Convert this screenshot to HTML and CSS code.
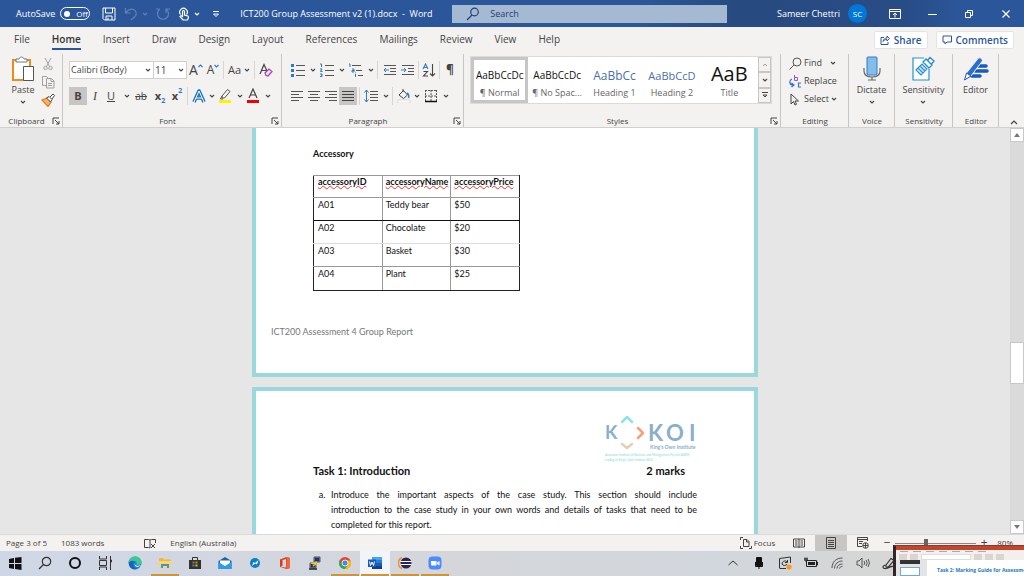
FILE: index.html
```html
<!DOCTYPE html>
<html lang="en">
<head>
<meta charset="utf-8">
<title>ICT200 Group Assessment v2 (1).docx - Word</title>
<link rel="stylesheet" href="styles.css">
</head>
<body>
<svg class="defs" aria-hidden="true">
  <symbol id="chev" viewBox="0 0 6 6"><path d="M1 2l2 2 2-2" fill="none" stroke="currentColor" stroke-width="1.1"/></symbol>
  <symbol id="launch" viewBox="0 0 8 8"><path d="M1 7V1h6M3 3l4 4M7 4v3H4" fill="none" stroke="currentColor"/></symbol>
</svg>

<header class="titlebar">
  <label class="autosave" for="autosave">AutoSave
    <span class="toggle"><input type="checkbox" id="autosave"><i class="knob"></i>Off</span>
  </label>
  <div class="quick">
    <button aria-label="Save"><svg width="14" height="14" viewBox="0 0 14 14" fill="none" stroke="currentColor"><path d="M1 1h12v12H2.500L1 11.500zM3.500 1v5h7V1M4 13V9h6v4M6 10.500V13"/></svg></button>
    <button class="dim" aria-label="Undo"><svg width="14" height="14" viewBox="0 0 14 14" fill="none" stroke="currentColor" stroke-width="1.200"><path d="M1.500 1v5h5M1.800 5.800C4 3 7 1.500 9.500 2.500c3 1.200 3.500 4.500 1.500 7L7 13"/></svg><svg class="chev"><use href="#chev"/></svg></button>
    <button class="dim" aria-label="Redo"><svg width="14" height="14" viewBox="0 0 14 14" fill="none" stroke="currentColor" stroke-width="1.200"><path d="M3.500 2.500a5.500 5.500 0 1 0 7 0M10 6V2h4M0 2h4"/></svg></button>
    <button aria-label="Touch mode"><svg width="12" height="14" viewBox="0 0 12 14" fill="none" stroke="currentColor" stroke-width="1.200"><path d="M2.500 7.500a3.800 3.800 0 1 1 6 0M4.500 9.500V4.500a1 1 0 0 1 2 0V8l3 .8c1 .3 1 1.200.8 2.200L9.500 13H5L2 9.500l1-.8z"/></svg><svg class="chev"><use href="#chev"/></svg></button>
    <button aria-label="Customize toolbar"><svg width="8" height="8" viewBox="0 0 8 8" fill="none" stroke="currentColor"><path d="M1 1.500h6M1.500 4L4 6.500 6.500 4z"/></svg></button>
  </div>
  <span class="doctitle">ICT200 Group Assessment v2 (1).docx &nbsp;-&nbsp; Word</span>
  <label class="search"><svg width="14" height="14" viewBox="0 0 14 14" fill="none" stroke="currentColor" stroke-width="1.200"><circle cx="8.500" cy="5" r="3.800"/><path d="M6 8L1 13"/></svg><input type="text" placeholder="Search" aria-label="Search"></label>
  <div class="user"><span>Sameer Chettri</span><span class="avatar">SC</span></div>
  <div class="winbtns">
    <button aria-label="Ribbon display"><svg width="12" height="10" viewBox="0 0 12 10" fill="none" stroke="currentColor"><path d="M.5.5h11v9H.5zM.5 2.500h11M6 8.500V4M4 6l2-2 2 2"/></svg></button>
    <button aria-label="Minimize"><svg width="10" height="10" viewBox="0 0 10 10" stroke="currentColor"><path d="M1 5.500h9"/></svg></button>
    <button aria-label="Restore"><svg width="10" height="10" viewBox="0 0 10 10" fill="none" stroke="currentColor"><path d="M1.500 3.500h5v5h-5zM3.500 3V1.500h5v5H7"/></svg></button>
    <button aria-label="Close"><svg width="10" height="10" viewBox="0 0 10 10" stroke="currentColor" stroke-width="1.200"><path d="M1.500 1.500l7 7M8.500 1.500l-7 7"/></svg></button>
  </div>
</header>

<nav class="tabs">
  <a href="#">File</a><a href="#" class="on">Home</a><a href="#">Insert</a><a href="#">Draw</a><a href="#">Design</a><a href="#">Layout</a><a href="#">References</a><a href="#">Mailings</a><a href="#">Review</a><a href="#">View</a><a href="#">Help</a>
  <div class="collab">
    <button><svg width="10" height="10" viewBox="0 0 10 10" fill="none" stroke="currentColor"><path d="M4 2.500H1v7h7V7M3 6.500C3.500 4 5 3 7 3V1l2.500 2.500L7 6V4.500C5 4.500 4 5 3 6.500z"/></svg>Share</button>
    <button><svg width="10" height="10" viewBox="0 0 10 10" fill="none" stroke="currentColor"><path d="M1 1h8.500v6H5L3 9V7H1z"/></svg>Comments</button>
  </div>
</nav>

<section class="ribbon">
  <div class="group clip">
    <div class="body">
      <button class="big"><svg width="24" height="26" viewBox="0 0 24 26" fill="none"><path d="M2 4h17v20H2z" fill="#fff" stroke="#ef8a1d" stroke-width="2"/><path d="M5 6V3h3c.5-2.500 4.500-2.500 5 0h3v3z" fill="#fff" stroke="#777"/><path d="M12.500 10.500h10v14h-10z" fill="#fff" stroke="#555"/></svg><span>Paste</span><svg class="chev"><use href="#chev"/></svg></button>
      <div class="stack">
        <button aria-label="Cut" class="gray"><svg width="12" height="14" viewBox="0 0 12 14" fill="none" stroke="currentColor"><path d="M3 1l4.500 8.500M9 1L4.500 9.500"/><circle cx="3.500" cy="11" r="1.700"/><circle cx="8.500" cy="11" r="1.700"/></svg></button>
        <button aria-label="Copy" class="gray"><svg width="14" height="14" viewBox="0 0 14 14" fill="none" stroke="currentColor"><path d="M5 10.500H1.500v-9h4L8 4M5.500 3.500h5L13 6v7H5.500zM10 4v2.500h3M7 8.500h4M7 10.500h4"/></svg></button>
        <button aria-label="Format painter"><svg width="14" height="14" viewBox="0 0 14 14" fill="none"><path d="M1 7l5-2 4 4-3 4.500z" fill="#f7b26a" stroke="#e07b14" stroke-width="1.200"/><path d="M5.500 5L8 3.500 11 6.500 9.500 9zM9 4l3-3 1.500 1.500L11 6" fill="#fff" stroke="#444"/></svg></button>
      </div>
    </div>
    <div class="name"><span>Clipboard</span><button aria-label="Clipboard options"><svg width="8" height="8"><use href="#launch"/></svg></button></div>
  </div>

  <div class="group font">
    <div class="body rows">
      <div class="row">
        <div class="pick face"><select aria-label="Font"><option>Calibri (Body)</option></select><svg class="chev"><use href="#chev"/></svg></div>
        <div class="pick size"><select aria-label="Font size"><option>11</option></select><svg class="chev"><use href="#chev"/></svg></div>
        <button class="w18 t14" aria-label="Grow font">A<svg width="5" height="12" viewBox="0 0 5 12" fill="none" stroke="#2b7cc4" stroke-width="1.200"><path d="M.5 3l2-2 2 2"/></svg></button>
        <button class="w16 t12" aria-label="Shrink font">A<svg width="5" height="12" viewBox="0 0 5 12" fill="none" stroke="#2b7cc4" stroke-width="1.200"><path d="M.5 1l2 2 2-2"/></svg></button>
        <i class="sep"></i>
        <button class="w26 t11">Aa<svg class="chev"><use href="#chev"/></svg></button>
        <i class="sep"></i>
        <button class="w18" aria-label="Clear formatting"><svg width="14" height="14" viewBox="0 0 14 14" fill="none"><path d="M1 11L5 1.500 8 8M2.500 7.500H7" stroke="#444" stroke-width="1.200"/><path d="M6 10l4-4 3 2.500-4 4.500-2-.5z" fill="#f3e3f6" stroke="#a33fb5" stroke-width="1.200"/></svg></button>
      </div>
      <div class="row">
        <button class="w18 t11 on b">B</button><button class="w16 t12 it">I</button><button class="w16 t11 un">U</button><button class="w12" aria-label="Underline options"><svg class="chev"><use href="#chev"/></svg></button>
        <button class="w20 t10"><s>ab</s></button><button class="w18 t11 b x">x<sub>2</sub></button><button class="w16 t11 b x">x<sup>2</sup></button>
        <i class="sep"></i>
        <button class="w26" aria-label="Text effects"><svg width="14" height="15" viewBox="0 0 14 15" fill="none" stroke-linejoin="round"><path d="M2 13L7 2l5 11M4 9h6" stroke="#1e74bd" stroke-width="3.600"/><path d="M2 13L7 2l5 11M4 9h6" stroke="#fff" stroke-width="1"/></svg><svg class="chev"><use href="#chev"/></svg></button>
        <button class="w28" aria-label="Highlight"><svg width="14" height="16" viewBox="0 0 14 16" fill="none"><path d="M4 8l5.500-6.500 2.500 2L6.500 10H4zM4 8l-1.500 3H5" stroke="#555"/><path d="M1 12h12v3H1z" fill="#fff200"/></svg><svg class="chev"><use href="#chev"/></svg></button>
        <button class="w28" aria-label="Font color"><svg width="14" height="16" viewBox="0 0 14 16" fill="none"><path d="M3 10l4-9 4 9M4.500 7h5" stroke="#444" stroke-width="1.200"/><path d="M1 12h12v3H1z" fill="#f00000"/></svg><svg class="chev"><use href="#chev"/></svg></button>
      </div>
    </div>
    <div class="name"><span>Font</span><button aria-label="Font options"><svg width="8" height="8"><use href="#launch"/></svg></button></div>
  </div>

  <div class="group para">
    <div class="body rows">
      <div class="row">
        <button class="w28" aria-label="Bullets"><svg width="14" height="14" viewBox="0 0 14 14"><path d="M5 2.500h9M5 7.500h9M5 12.500h9" stroke="#555"/><path d="M0 1h3v3H0zM0 6h3v3H0zM0 11h3v3H0z" fill="#2b7cc4"/></svg><svg class="chev"><use href="#chev"/></svg></button>
        <button class="w30" aria-label="Numbering"><svg width="14" height="14" viewBox="0 0 14 14" fill="none"><path d="M5 2.500h9M5 7.500h9M5 12.500h9" stroke="#555"/><path d="M0 1h1.500v3M0 6h2L.5 8.500H2.500M0 11h2v2.500H0M1 12.200h1" stroke="#2b7cc4"/></svg><svg class="chev"><use href="#chev"/></svg></button>
        <button class="w28" aria-label="Multilevel list"><svg width="14" height="14" viewBox="0 0 14 14" fill="none"><path d="M3 2.500h9M7 7.500h6M9 12.500h5" stroke="#555"/><path d="M0 1h1v3M3 6h2v3H3V7.500h2M6.500 11v3M6.500 9.500v.8" stroke="#2b7cc4"/></svg><svg class="chev"><use href="#chev"/></svg></button>
        <i class="sep"></i>
        <button class="w18" aria-label="Decrease indent"><svg width="13" height="12" viewBox="0 0 13 12" fill="none"><path d="M1 1.500h12M7 4.500h6M7 7.500h6M1 10.500h12" stroke="#555"/><path d="M6 6H1M3 4L1 6l2 2" stroke="#2b7cc4"/></svg></button>
        <button class="w18" aria-label="Increase indent"><svg width="13" height="12" viewBox="0 0 13 12" fill="none"><path d="M1 1.500h12M7 4.500h6M7 7.500h6M1 10.500h12" stroke="#555"/><path d="M0 6h5M3 4l2 2-2 2" stroke="#2b7cc4"/></svg></button>
        <i class="sep"></i>
        <button class="w16" aria-label="Sort"><svg width="14" height="14" viewBox="0 0 14 14" fill="none"><path d="M1 6l2.500-5L6 6M2 4.500h3" stroke="#2b7cc4" stroke-width="1.100"/><path d="M1.500 8.500h4l-4 4.500h4.500M10.500 1v12M8 10.500l2.500 2.500 2.500-2.500" stroke="#444" stroke-width="1.100"/></svg></button>
        <i class="sep"></i>
        <button class="w16 t12 b" aria-label="Show marks">¶</button>
      </div>
      <div class="row">
        <button class="w16" aria-label="Align left"><svg width="12" height="12" viewBox="0 0 12 12" stroke="#555"><path d="M0 1.500h12M0 4.500h8M0 7.500h12M0 10.500h8"/></svg></button>
        <button class="w18" aria-label="Center"><svg width="12" height="12" viewBox="0 0 12 12" stroke="#555"><path d="M0 1.500h12M2 4.500h8M0 7.500h12M2 10.500h8"/></svg></button>
        <button class="w16" aria-label="Align right"><svg width="12" height="12" viewBox="0 0 12 12" stroke="#555"><path d="M0 1.500h12M4 4.500h8M0 7.500h12M4 10.500h8"/></svg></button>
        <button class="w18 on" aria-label="Justify"><svg width="12" height="12" viewBox="0 0 12 12" stroke="#444"><path d="M0 1.500h12M0 4.500h12M0 7.500h12M0 10.500h12"/></svg></button>
        <i class="sep"></i>
        <button class="w28" aria-label="Line spacing"><svg width="14" height="14" viewBox="0 0 14 14" fill="none"><path d="M6 2.500h8M6 5.500h8M6 8.500h8M6 11.500h8" stroke="#555"/><path d="M2.500 1v12M.5 3.500l2-2.500 2 2.500M.5 10.500l2 2.500 2-2.500" stroke="#2b7cc4"/></svg><svg class="chev"><use href="#chev"/></svg></button>
        <i class="sep"></i>
        <button class="w26" aria-label="Shading"><svg width="14" height="14" viewBox="0 0 14 14" fill="none"><path d="M2 6l4.500-4.500L10.500 6 6.500 9.500zM6 3V0" stroke="#444"/><path d="M10 4c2 1 2 3 1.500 5" stroke="#2b7cc4" stroke-width="1.500"/><path d="M1 11h12v3H1z" fill="#fff" stroke="#bbb" stroke-width=".5"/></svg><svg class="chev"><use href="#chev"/></svg></button>
        <button class="w30" aria-label="Borders"><svg width="14" height="14" viewBox="0 0 14 14" fill="none"><path d="M1.500 1v11M12.500 1v11M7 1v11M1 1.500h12M1 7h12" stroke="#555" stroke-dasharray="2 1"/><path d="M1 12.500h12" stroke="#111" stroke-width="1.500"/></svg><svg class="chev"><use href="#chev"/></svg></button>
      </div>
    </div>
    <div class="name"><span>Paragraph</span><button aria-label="Paragraph options"><svg width="8" height="8"><use href="#launch"/></svg></button></div>
  </div>

  <div class="group styles">
    <div class="body">
      <div class="gallery">
        <button class="style sel"><b>AaBbCcDc</b><span>¶ Normal</span></button>
        <button class="style"><b>AaBbCcDc</b><span>¶ No Spac...</span></button>
        <button class="style h1"><b>AaBbCc</b><span>Heading 1</span></button>
        <button class="style h2"><b>AaBbCcD</b><span>Heading 2</span></button>
        <button class="style title"><b>AaB</b><span>Title</span></button>
        <div class="more">
          <button aria-label="Previous styles" class="gray"><svg class="chev" viewBox="0 0 6 6"><path d="M1 4l2-2 2 2" fill="none" stroke="currentColor"/></svg></button>
          <button aria-label="Next styles"><svg class="chev"><use href="#chev"/></svg></button>
          <button aria-label="All styles"><svg width="6" height="8" viewBox="0 0 6 8" fill="none" stroke="currentColor"><path d="M0 1.500h6M1 4h4L3 6z"/></svg></button>
        </div>
      </div>
    </div>
    <div class="name"><span>Styles</span><button aria-label="Styles options"><svg width="8" height="8"><use href="#launch"/></svg></button></div>
  </div>

  <div class="group edit">
    <div class="body">
      <button><svg width="13" height="13" viewBox="0 0 13 13" fill="none" stroke="#555"><circle cx="8" cy="5" r="4"/><path d="M5 8l-4.500 4.500"/></svg>Find<svg class="chev far"><use href="#chev"/></svg></button>
      <button><svg width="13" height="13" viewBox="0 0 13 13" fill="none"><path d="M5.500 0v5.500h3v-3h-3" stroke="#b04fc0"/><path d="M3 4C0 5 0 10 4 10M2.500 8L5 10l-2.500 2M12 8H9.500v4H12" stroke="#2b7cc4" stroke-width="1.200"/></svg>Replace</button>
      <button><svg width="13" height="13" viewBox="0 0 13 13" fill="none" stroke="#444"><path d="M2 1v10l2.500-2.500L6 12l1.500-.7L6 8h3.500z"/></svg>Select<svg class="chev"><use href="#chev"/></svg></button>
    </div>
    <div class="name"><span>Editing</span></div>
  </div>

  <div class="group voice">
    <div class="body"><button class="big"><svg width="20" height="26" viewBox="0 0 20 26" fill="none"><path d="M2 12v3c0 4 3 6 8 6s8-2 8-6v-3M10 21v3M6 24h8" stroke="#666" stroke-width="1.200"/><rect x="5" y="1" width="10" height="18" rx="1" fill="#84bdea" stroke="#2f7fc1"/></svg><span>Dictate</span><svg class="chev"><use href="#chev"/></svg></button></div>
    <div class="name"><span>Voice</span></div>
  </div>
  <div class="group sens">
    <div class="body"><button class="big"><svg width="24" height="26" viewBox="0 0 24 26" fill="none" stroke="#2a8fd0"><path d="M18 13v11H2V2h11" fill="#fff" stroke-width="1.200"/><path d="M5 14l6-6 5 5-6 6zM7 12l5 5M9 10l5 5" fill="#d4ebf9" stroke-width="1.200"/><path d="M12 6l3-3 6 6-3 3zM17 4l2-2.500L23 5l-2.500 3" fill="#fff" stroke-width="1.400"/></svg><span>Sensitivity</span><svg class="chev"><use href="#chev"/></svg></button></div>
    <div class="name"><span>Sensitivity</span></div>
  </div>
  <div class="group editor">
    <div class="body"><button class="big"><svg width="26" height="26" viewBox="0 0 26 26" fill="none"><path d="M14 10h9M12 15h12M9 20h8" stroke="#185abd" stroke-width="3.500" stroke-linecap="round"/><path d="M1.500 24l2-7L15 2.500c1.500-2 5.500 1 4 3L8 20z" fill="#2a6fd0" stroke="#f3f2f1"/><path d="M1.500 24l2-7 4.500 3z" fill="#fff" stroke="#185abd"/></svg><span>Editor</span></button></div>
    <div class="name"><span>Editor</span></div>
  </div>
  <button class="collapse" aria-label="Collapse ribbon"><svg width="8" height="6" viewBox="0 0 8 6" fill="none" stroke="currentColor" stroke-width="1.200"><path d="M1 5l3-3 3 3"/></svg></button>
</section>

<main class="work">
  <div class="canvas">
    <article class="page first">
      <h2>Accessory</h2>
      <table>
        <thead><tr><th><span>accessoryID</span></th><th><span>accessoryName</span></th><th><span>accessoryPrice</span></th></tr></thead>
        <tbody>
          <tr class="dark"><td>A01</td><td>Teddy bear</td><td>$50</td></tr>
          <tr class="faint"><td>A02</td><td>Chocolate</td><td>$20</td></tr>
          <tr><td>A03</td><td>Basket</td><td>$30</td></tr>
          <tr class="last"><td>A04</td><td>Plant</td><td>$25</td></tr>
        </tbody>
      </table>
      <footer>ICT200 Assessment 4 Group Report</footer>
    </article>
    <article class="page">
      <svg class="logo" width="94" height="50" viewBox="0 0 94 50" role="img" aria-label="KOI King's Own Institute">
        <g fill="none" stroke-width="2.500" stroke-linecap="round" stroke-linejoin="round">
          <path d="M19 7l5-5 5 5" stroke="#8fe3e3"/><path d="M35 13l5 5-5 5" stroke="#f6a078"/><path d="M19 29l5 4 5-4" stroke="#e6cdb4"/>
        </g>
        <g class="koi"><text x="2" y="24" class="k">K</text><text x="45" y="26">K</text><text x="63" y="26">O</text><text x="86" y="26">I</text></g>
        <text x="47" y="34" class="king">King's Own Institute</text>
        <text x="2" y="41" class="tiny">Australian Institute of Business and Management Pty Ltd (AIBM)</text>
        <text x="2" y="46" class="tiny">trading as King's Own Institute (KOI)</text>
      </svg>
      <h1><span>Task 1: Introduction</span><span>2 marks</span></h1>
      <ol type="a"><li><span>Introduce the important aspects of the case study. This section should include</span> <span>introduction to the case study in your own words and details of tasks that need to be</span> completed for this report.</li></ol>
    </article>
  </div>
  <div class="scroll">
    <button aria-label="Scroll up"><svg width="6" height="4" viewBox="0 0 6 4"><path d="M0 4l3-4 3 4z" fill="#777"/></svg></button>
    <div class="track"><div class="thumb"></div></div>
    <button aria-label="Scroll down"><svg width="6" height="4" viewBox="0 0 6 4"><path d="M0 0l3 4 3-4z" fill="#777"/></svg></button>
  </div>
</main>

<footer class="status">
  <span>Page 3 of 5</span><span>1083 words</span>
  <button class="proof" aria-label="Proofing"><svg width="12" height="11" viewBox="0 0 12 11" fill="none" stroke="currentColor"><path d="M6 2v8L4.500 9.500H.5v-8h4L6 2l1.500-.5h4V5M7 6l4 4M11 6l-4 4"/></svg></button>
  <span>English (Australia)</span>
  <div class="views">
    <button class="focus"><svg width="12" height="12" viewBox="0 0 12 12" fill="none" stroke="currentColor"><path d="M3 .5H.5V3M.5 9v2.500H3M9 11.500h2.500V9M3.500 2.500H7l2 2v5H3.500zM6.500 3v2H9"/></svg>Focus</button>
    <button aria-label="Read mode"><svg width="12" height="11" viewBox="0 0 12 11" fill="none" stroke="currentColor"><path d="M6 1v9M.5 1h11v8H.5zM2 3h2.500M2 5h2.500M2 7h2.500M7.500 3H10M7.500 5H10M7.500 7H10"/></svg></button>
    <button class="on" aria-label="Print layout"><svg width="10" height="12" viewBox="0 0 10 12" fill="none" stroke="currentColor"><path d="M.5.5h9v11h-9zM2 3.500h6M2 5.500h6M2 7.500h6M2 9.500h6"/></svg></button>
    <button aria-label="Web layout"><svg width="12" height="12" viewBox="0 0 12 12" fill="none" stroke="currentColor"><path d="M5 9.500H.5v-9h10V4M.5 2.500h10M2 4.500h4M2 6.500h3"/><circle cx="8.500" cy="8.500" r="2.800"/><path d="M6 8.500h5M8.500 6v5"/></svg></button>
  </div>
  <div class="zoombar">
    <button class="step" aria-label="Zoom out">−</button>
    <input type="range" min="10" max="200" value="80" aria-label="Zoom">
    <button class="step" aria-label="Zoom in">+</button>
  </div>
  <span class="pct">80%</span>
</footer>

<nav class="taskbar">
  <button aria-label="Start"><svg width="14" height="14" viewBox="0 0 14 14"><path d="M1 3l5-1v5H1zM7 1.800L13.500 1v6H7zM1 8h5v5l-5-1zM7 8h6.500v6L7 13z" fill="#111"/></svg></button>
  <button aria-label="Search"><svg width="14" height="14" viewBox="0 0 14 14" fill="none" stroke="#333" stroke-width="1.200"><circle cx="8.500" cy="5.500" r="4.200"/><path d="M5.500 8.500L1 13"/></svg></button>
  <button aria-label="Cortana"><svg width="14" height="14" viewBox="0 0 14 14"><circle cx="7" cy="7" r="5" fill="none" stroke="#111" stroke-width="2"/></svg></button>
  <button aria-label="Task view"><svg width="14" height="14" viewBox="0 0 14 14" fill="none" stroke="#333"><path d="M1.500 0v3h7V0M1.500 14v-3h7v3M1.500 4.500h7v5h-7zM12.500 0v14M12 4h1.500v2H12"/></svg></button>
  <button aria-label="Edge"><svg width="14" height="14" viewBox="0 0 14 14"><circle cx="7" cy="7" r="6.500" fill="#1b7fd0"/><path d="M.8 6C1.500 2 5 .3 8 .6c4 .5 6 4 5.300 6.500C12.800 9 10 9.500 8.500 8.500 9.500 5 6 3.500.8 6z" fill="#3ec88f"/><path d="M6 6c-2 2-1 6 3 7-5 1.500-8.500-2.500-8-6C2 4.500 5 4.500 6 6z" fill="#1565b8"/><path d="M6.500 7c.5 3 4 3.500 6.500 2-1 1.500-4 3-6 1z" fill="#dce8f2"/></svg></button>
  <button class="run" aria-label="File Explorer"><svg width="14" height="14" viewBox="0 0 14 14"><path d="M1 2h4l1 1.500h7V12H1z" fill="#f0b93a"/><path d="M1 5h12v7H1z" fill="#ffd766"/><path d="M3 12V8h8v4H9v-2H5v2z" fill="#3d93d8"/></svg></button>
  <button aria-label="Store"><svg width="14" height="14" viewBox="0 0 14 14"><path d="M4.500 4V1.500h5V4" fill="none" stroke="#333"/><path d="M1 4h12v9H1z" fill="#333"/><path d="M4.500 5.500h2v2h-2z" fill="#f25022"/><path d="M7.500 5.500h2v2h-2z" fill="#7fba00"/><path d="M4.500 8.500h2v2h-2z" fill="#00a4ef"/><path d="M7.500 8.500h2v2h-2z" fill="#ffb900"/></svg></button>
  <button aria-label="Mail"><svg width="14" height="14" viewBox="0 0 14 14"><path d="M.5 5L7 1l6.500 4v8H.5z" fill="#1267b4"/><path d="M2 4.500h10V8l-5 3-5-3z" fill="#fff"/><path d="M.5 6L7 10l6.500-4v7H.5z" fill="#2e9be6"/></svg></button>
  <button aria-label="Messenger"><svg width="12" height="12" viewBox="0 0 12 12"><circle cx="6" cy="6" r="5" fill="#0a7fc9"/><path d="M3 9l1.500-4L6 6l3.500-3L8 7.500 6 6.500z" fill="#fff"/></svg></button>
  <button aria-label="Office"><svg width="12" height="14" viewBox="0 0 12 14"><path d="M1 3.500L7.500 1l3.500 1v10l-3.500 1L1 11l6 .5V3L3.500 4v6L1 11z" fill="#d83b1c"/><path d="M7.500 1L11 2v10l-3.500 1z" fill="#ef6a3a"/></svg></button>
  <button aria-label="PuTTY"><svg width="14" height="14" viewBox="0 0 14 14" stroke="#222" stroke-width=".7"><path d="M6 1h6v5H6zM2 7h6v5H2z" fill="#bbb"/><path d="M7 2h4v3H7zM3 8h4v3H3z" fill="#2430b8"/><path d="M9 6L5 7.500l3 .5-3 2" fill="none" stroke="#e6d321" stroke-width="1.500"/><path d="M1 13h8" stroke-width="1.500"/></svg></button>
  <button class="run" aria-label="Chrome"><svg width="14" height="14" viewBox="0 0 14 14"><circle cx="7" cy="7" r="6" fill="#e94335"/><path d="M1.700 4.200A6 6 0 0 0 7 13l3-4.500L4.500 8z" fill="#34a853"/><path d="M7 13a6 6 0 0 0 5.500-8.500H8L10 8.500z" fill="#fbbc05"/><circle cx="7" cy="7" r="3" fill="#4285f4" stroke="#fff" stroke-width=".8"/></svg></button>
  <button class="run active" aria-label="Word"><svg width="14" height="14" viewBox="0 0 14 14"><path d="M4 1h10v3H4z" fill="#41a5ee"/><path d="M4 4h10v3H4z" fill="#2b7cd3"/><path d="M4 7h10v3H4z" fill="#185abd"/><path d="M4 10h10v3H4z" fill="#103f91"/><path d="M0 3.500h8v7.500H0z" fill="#185abd"/><path d="M1.500 5.500l1 4L4 6l1.500 3.500 1-4" stroke="#fff" fill="none"/></svg></button>
  <button class="run" aria-label="Eclipse"><svg width="14" height="14" viewBox="0 0 14 14"><path d="M4 1.500A6 6 0 0 0 4 12.500" stroke="#ef8e2c" stroke-width="1.500" fill="none"/><circle cx="8" cy="7" r="5.500" fill="#2c2255"/><path d="M2.500 5.500h11M2.500 8.500h11" stroke="#fff"/></svg></button>
  <button class="run" aria-label="Zoom"><svg width="14" height="14" viewBox="0 0 14 14"><rect x=".5" y=".5" width="13" height="13" rx="4" fill="#4a8cff"/><path d="M3 5h5.500v4.500H3.800L3 8.700zM9 6.500L11.500 5v4.500L9 8z" fill="#fff"/></svg></button>
  <div class="tray">
    <button aria-label="Hidden icons"><svg width="12" height="12" viewBox="0 0 12 12" fill="none" stroke="#333"><path d="M1.500 8L6 4l4.500 4"/></svg></button>
    <button aria-label="Microphone"><svg width="10" height="14" viewBox="0 0 10 14"><rect x="2" y="1" width="6" height="9" rx="1" fill="#111"/><path d="M1.500 6v4.500h7V6M5 10v3" stroke="#111" fill="none"/></svg></button>
    <button aria-label="Updates"><svg width="14" height="14" viewBox="0 0 14 14" fill="none" stroke="#333"><path d="M1.500 12V2.500L12.500 1v6M1.500 12.500H8M4 8c0-3 4-4 5-2M9.500 4v2.500H7M9 8c-1 2-4 2-5 0"/><circle cx="11" cy="11" r="2.600" fill="#f79a1e" stroke="none"/></svg></button>
    <button aria-label="Battery"><svg width="14" height="14" viewBox="0 0 14 14"><path d="M4 6h7v3H4z" fill="#222"/><path d="M2.500 4.500h10v6h-10zM12.500 6h1v3h-1M0 3h4M1 1.500V5h2V1.500" fill="none" stroke="#222"/></svg></button>
    <button aria-label="Wi-Fi"><svg width="14" height="14" viewBox="0 0 14 14" fill="none" stroke="#555"><path d="M2 12C2 6 6 2 12.500 2M4.500 12.500C4.500 8 8 5 12.500 5M7 12.500C7 10 9 8 12.500 8M9.500 12.500c0-1 1-2 3-2"/></svg></button>
    <button aria-label="Volume"><svg width="14" height="14" viewBox="0 0 14 14" fill="none" stroke="#555"><path d="M1 5h2l3-3v10L3 9H1zM8 5q1.500 2 0 4M10 4q2.500 3 0 6M12 3q3 4 0 8"/></svg></button>
    <button aria-label="Pen"><svg width="14" height="14" viewBox="0 0 14 14" fill="none" stroke="#333" stroke-width="1.200"><path d="M4 9l5-6.500 3 2L6.500 11H4zM4 9c-4 0-4 4 0 3.500 3-.5 5-3 8-2"/></svg></button>
  </div>
</nav>

<aside class="preview" aria-label="Window preview">
  <div class="pbar"></div>
  <div class="ptabs"><i></i><i></i><i></i><i></i><i></i><i></i><i></i></div>
  <div class="ptools"><i></i><i></i><b></b><i></i><i></i><i></i></div>
  <div class="pmain"><div class="pslides"><i></i><i></i></div><div class="psheet">Task 2: Marking Guide for Assessment</div></div>
</aside>
</body>
</html>
```
FILE: styles.css
```css
* { box-sizing: border-box; }
body {
  margin: 0;
  height: 100vh;
  display: flex;
  flex-direction: column;
  overflow: hidden;
  font-family: "Open Sans", "Noto Sans", sans-serif;
  font-size: 9px;
  line-height: 12px;
  color: #444;
  background: #e6e6e6;
}
button, input, select { font: inherit; color: inherit; border: 0; background: none; padding: 0; margin: 0; }
button { display: flex; align-items: center; justify-content: center; flex: none; white-space: nowrap; }
a { color: inherit; text-decoration: none; }
svg { flex: none; display: block; }
.defs { position: absolute; width: 0; height: 0; }
.chev { width: 6px; height: 6px; }
.gray { color: #a0a0a0; }

/* title bar */
.titlebar {
  flex: none;
  height: 27px;
  display: flex;
  align-items: center;
  padding-left: 16px;
  color: #fff;
  font-size: 9px;
  background: linear-gradient(90deg, #2b579a 0 62%, #274b80 72%, #284c84 88%, #2b579a 94%);
}
.autosave { display: flex; align-items: center; gap: 5px; }
.toggle { display: flex; align-items: center; gap: 6px; width: 30px; height: 13px; border: 1px solid #fff; border-radius: 7px; padding-left: 3px; font-size: 8px; }
.toggle input { appearance: none; width: 0; height: 0; position: absolute; }
.knob { width: 6px; height: 6px; border-radius: 50%; background: #fff; }
.quick { display: flex; align-items: center; gap: 8px; padding: 0 20px 0 12px; }
.quick button { gap: 4px; }
.quick .dim { color: #5f82b8; }
.quick button:last-child { padding-left: 4px; }
.doctitle { white-space: nowrap; width: 212px; }
.search { display: flex; align-items: center; gap: 10px; flex: 0 1 275px; height: 18px; padding-left: 14px; background: #a6b9d3; color: #1f3f77; }
.search input { width: 100%; min-width: 0; outline: 0; }
.search input::placeholder { color: #1f3f77; opacity: 1; }
.user { margin-left: auto; display: flex; align-items: center; gap: 8px; white-space: nowrap; }
.avatar { width: 19px; height: 19px; border-radius: 50%; background: #0078d7; font-size: 8px; line-height: 19px; text-align: center; }
.winbtns { display: flex; padding-left: 9px; }
.winbtns button { width: 37px; height: 27px; }

/* tabs */
.tabs { flex: none; height: 26px; display: flex; align-items: center; gap: 22px; padding: 0 10px 0 14px; background: #f3f2f1; font-size: 10px; }
.tabs a { height: 20px; line-height: 18px; }
.tabs a.on { font-weight: 600; border-bottom: 2px solid #2b579a; color: #333; }
.collab { margin-left: auto; display: flex; gap: 8px; }
.collab button { height: 18px; gap: 4px; padding: 0 5px; background: #fff; border: 1px solid #e6e4e2; border-radius: 2px; color: #2b579a; font-weight: 600; }

/* ribbon */
.ribbon { flex: none; height: 75px; display: flex; background: #f3f2f1; border-bottom: 1px solid #d2d0ce; position: relative; z-index: 1; }
.group { display: flex; flex-direction: column; flex: none; margin: 1px 0 0; border-right: 1px solid #c8c6c4; }
.clip { width: 63px; }
.font { width: 219px; }
.para { width: 182px; }
.styles { flex: 1; min-width: 0; }
.edit { width: 68px; }
.voice { width: 46px; }
.sens { width: 58px; }
.editor { width: 46px; }
.body { flex: 1; display: flex; justify-content: center; }
.name { height: 12px; display: flex; align-items: center; justify-content: center; padding: 0 1px 0 2px; font-size: 8px; }
.name span { flex: 1; text-align: center; }
.name button { width: 10px; height: 10px; }
.big { flex-direction: column; justify-content: flex-start; gap: 2px; padding-top: 2px; }
.big .chev { margin-top: 1px; }
.clip .body { gap: 6px; padding-left: 4px; }
.stack { display: flex; flex-direction: column; gap: 4px; padding-top: 3px; }
.rows { flex-direction: column; justify-content: flex-start; gap: 8px; padding: 7px 0 0 6px; }
.row { display: flex; align-items: center; height: 18px; }
.row button { height: 18px; }
.row button.on { background: #c8c6c4; }
.row button .chev { margin-left: 5px; }
.row .w12 .chev, .row .w26 .chev { margin-left: 3px; }
.w12 { width: 12px; }
.w16 { width: 16px; }
.w18 { width: 18px; }
.w20 { width: 20px; }
.w26 { width: 26px; }
.w28 { width: 28px; }
.w30 { width: 30px; }
.t10 { font-size: 10px; }
.t11 { font-size: 11px; }
.t12 { font-size: 12px; }
.t14 { font-size: 14px; }
.b { font-weight: 700; }
.it { font-family: "Liberation Serif", serif; font-style: italic; }
.un { text-decoration: underline; }
sub, sup { font-size: 7px; color: #2b7cc4; line-height: 8px; }
sub { align-self: flex-end; }
sup { align-self: flex-start; }
.sep { width: 1px; height: 18px; margin: 0 2px; background: #d8d6d4; }
.pick { display: flex; align-items: center; height: 18px; background: #fff; border: 1px solid #d2d0ce; padding-right: 2px; }
.pick select { appearance: none; flex: 1; min-width: 0; outline: 0; padding-left: 1px; }
.face { width: 85px; }
.size { width: 33px; border-left: 0; }
.size select { font-size: 10px; }
.para .rows { padding-left: 7px; }

.gallery { flex: 1; display: flex; height: 48px; margin: 2px 8px 0 6px; background: #fff; border: 1px solid #dddbd9; }
.style { flex: 1 1 58px; min-width: 0; flex-direction: column; justify-content: flex-end; gap: 5px; padding: 0 2px 1px; border: 3px solid transparent; border-width: 3px 0; }
.style.sel { border: 3px solid #c6c6c6; padding: 0 1px 1px; }
.style b { font-weight: 400; color: #111; width: 100%; overflow: hidden; line-height: 14px; font-size: 10px; }
.style span { color: #666; }
.h1 b, .h2 b { color: #4a70ae; line-height: 16px; }
.style.h1, .style.h2 { gap: 3px; }
.h1 b { font-size: 12px; }
.h2 b { font-size: 11px; }
.title b { font-size: 20px; line-height: 27px; }
.style.title { gap: 0; }
.more { flex: none; width: 13px; display: flex; flex-direction: column; }
.more button { flex: 1; border: 1px solid #c8c6c4; background: #f3f2f1; }
.edit .body { flex-direction: column; justify-content: flex-start; padding: 0 0 0 8px; }
.edit .body button { justify-content: flex-start; gap: 2px; height: 18px; }
.edit .far { margin-left: 6px; }
.collapse { flex: none; width: 25px; align-items: flex-end; padding: 0 0 2px 4px; }

/* document */
.work { flex: 1; min-height: 0; display: flex; }
.canvas { flex: 1; min-width: 0; overflow: hidden; display: flex; flex-direction: column; align-items: center; gap: 10px; }
.page { flex: none; width: 506px; background: #fff; border: 4px solid #9bd8dc; padding: 24px 57px; color: #111; font-family: Lato, "Noto Sans", sans-serif; font-size: 9px; }
.page.first { border-top: 0; padding: 19px 57px 35px; }
.page h2 { margin: 0 0 14px; font-size: 9px; line-height: 14px; }
table { border-collapse: collapse; table-layout: fixed; width: 207px; border: 1px solid #222; }
th, td { height: 23px; padding: 0 5px 0 4px; text-align: left; vertical-align: top; border: 1px solid #999; font-weight: 400; line-height: 14px; }
th { height: 22px; font-weight: 700; line-height: 12px; }
th + th, td + td { padding-left: 3px; }
th span { text-decoration: underline wavy #e33 1px; text-underline-offset: 0; }
.dark td { border-bottom-color: #111; }
.faint td { border-bottom-color: #ddd; }
.last td { height: 24px; border-bottom-color: #222; }
tr > :first-child { border-left-color: #222; }
tr > :last-child { border-right-color: #222; }
.page footer { margin: 35px 0 0 -42px; color: #777; }
.logo { margin: 0 0 0 auto; }
.koi { font: 700 22px Lato, sans-serif; fill: #8aaecb; }
.koi .k { font-size: 18px; }
.king { font: 700 5px Lato, sans-serif; fill: #8aaecb; }
.tiny { font: 3px Lato, sans-serif; fill: #7fd8dc; }
.page h1 { display: flex; justify-content: space-between; margin: -2px 12px 8px 0; font-size: 11px; line-height: 16px; }
ol { margin: 0; padding-left: 18px; line-height: 15px; }
li { list-style-type: "a.\2002\2009"; }
li span { display: block; text-align-last: justify; white-space: nowrap; }
.scroll { flex: none; width: 14px; display: flex; flex-direction: column; background: #dadada; }
.scroll button { height: 14px; background: #fff; border: 1px solid #c8c8c8; }
.track { flex: 1; display: flex; flex-direction: column; padding-top: 200px; }
.thumb { height: 42px; background: #fff; border: 1px solid #c8c8c8; }

/* status bar */
.status { flex: none; height: 17px; display: flex; align-items: center; gap: 14px; padding: 0 11px 0 6px; background: #f3f2f1; border-top: 1px solid #dcdad8; font-size: 8px; white-space: nowrap; }
.proof { margin: 0 0 0 26px; }
.views { display: flex; margin-left: auto; align-items: center; height: 100%; }
.views button { width: 32px; height: 100%; }
.views .focus { width: auto; gap: 2px; padding-right: 8px; }
.views .on { background: #c8c6c4; }
.zoombar { display: flex; align-items: center; gap: 4px; margin: 0 -5px 0 -10px; }
.step { width: 8px; font-size: 12px; }
.status input { appearance: none; width: 81px; height: 12px; background: linear-gradient(#888, #888) center / 100% 1px no-repeat; }
.status input::-webkit-slider-thumb { appearance: none; width: 4px; height: 9px; background: #666; }

/* taskbar */
.taskbar { flex: none; height: 25px; display: flex; background: linear-gradient(90deg, #cfd7e6, #d4d6da 45%, #d2d7dd 70%, #d8d6cf); }
.taskbar button { width: 30px; height: 25px; border-bottom: 2px solid transparent; }
.taskbar .run { border-image: linear-gradient(90deg, transparent 3px, #cb9540 3px, #cb9540 27px, transparent 27px) 2; }
.taskbar .active { background: #f2f4f8; }
.tray { margin-left: auto; display: flex; padding-right: 122px; }
.tray button { width: 26px; }

/* floating window preview */
.preview { position: absolute; right: 0; bottom: 0; z-index: 2; width: 131px; height: 31px; display: flex; flex-direction: column; overflow: hidden; background: #f2efed; border-left: 3px solid #33262a; border-top: 1px solid #8a3a2c; }
.pbar { flex: none; height: 4px; background: #c2452d; }
.ptabs { display: flex; gap: 5px; padding: 1px 4px; }
.ptabs i { width: 8px; height: 1px; background: #aaa; }
.ptools { display: flex; align-items: center; gap: 3px; height: 9px; padding: 0 3px; }
.ptools i { width: 8px; height: 6px; background: #dad5d2; }
.ptools b { width: 50px; height: 6px; background: #fff; border: 1px solid #ddd; }
.pmain { flex: 1; display: flex; gap: 7px; background: #e4e4e4; }
.pslides { width: 24px; padding-left: 4px; display: flex; flex-direction: column; gap: 3px; }
.pslides i { height: 4px; background: #333; }
.pslides i + i { height: 9px; background: #fff; border: 1px solid #72a8d8; }
.psheet { flex: 1; background: #fff; padding: 6px 0 0 10px; color: #1d7bbd; font-size: 5px; font-weight: 700; line-height: 8px; white-space: nowrap; overflow: hidden; }
```
